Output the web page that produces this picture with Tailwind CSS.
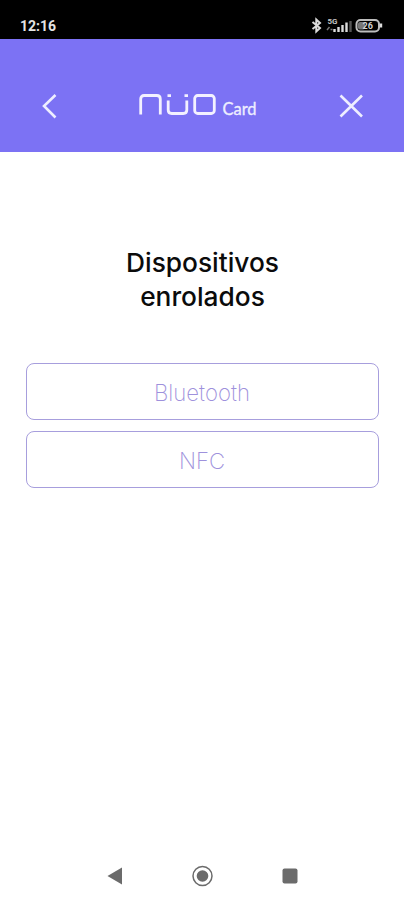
<!DOCTYPE html>
<html lang="es">

<head>
    <meta charset="UTF-8">
    <meta name="viewport" content="width=device-width, initial-scale=1.0">
    <title>Dispositivos enrolados</title>
    <script src="https://cdn.jsdelivr.net/npm/@tailwindcss/browser@4"></script>
</head>

<body class="flex h-screen flex-col overflow-hidden bg-white font-['Inter',sans-serif]">
    <!-- Status bar -->
    <div class="flex h-[39px] shrink-0 items-start justify-between bg-black pl-5 pr-5 pt-[17px] text-[#e4e4e4]">
        <span class="font-['Roboto',sans-serif] text-[14px] font-bold leading-[18px]">12:16</span>
        <svg class="h-[18px] w-[74px]" viewBox="0 0 74 18" fill="none" stroke="#dcdcdc">
            <path d="M2.500 5l7.500 6-3.700 3.500v-12L10 6l-7.500 6" stroke-width="2" />
            <text x="17.500" y="7" font-family="Roboto, sans-serif" font-size="8" font-weight="700" fill="#c4c4c4" stroke="none">5G</text>
            <path d="M17 13l2.500-3M20.500 12.500h2" stroke="#777" stroke-width="1.500" />
            <path d="M24.500 15v-3M28.500 15v-5M32.500 15V8M36.500 15V5.500" stroke-width="2.400" />
            <path d="M40.500 15V4" stroke="#555" stroke-width="2.400" />
            <rect x="46.500" y="3" width="22.500" height="11.500" rx="4" stroke="#bdbdbd" stroke-width="2" />
            <rect x="48" y="5" width="7" height="7.500" rx="2" fill="#777" stroke="none" />
            <path d="M71 6.500v4" stroke-width="2.400" />
            <text x="52.500" y="12" font-family="Roboto, sans-serif" font-size="9" font-weight="700" fill="#d2d2d2" stroke="none">26</text>
        </svg>
    </div>

    <!-- Header -->
    <header class="flex h-[113px] shrink-0 items-start justify-between bg-[#7c72f4] pl-[41px] pr-10 pt-[52px]">
        <button aria-label="Volver">
            <svg class="h-[30px] w-4" viewBox="0 0 16 30" fill="none" stroke="#eeeeff" stroke-width="2.600">
                <path d="M14.500 4L3 15l11.500 11.500" />
            </svg>
        </button>
        <div class="flex items-start gap-[5px] pt-[3px]">
            <svg class="h-6 w-[78px]" viewBox="0 0 78 24" fill="none" stroke="#f3f1ff" stroke-width="2.800">
                <path d="M1.700 20.500V5Q1.700 1.500 5.200 1.500H17.800Q21.300 1.500 21.300 5V20.500" />
                <path d="M29.200 6.500V16Q29.200 19.500 32.700 19.500H44.300Q47.800 19.500 47.800 16V6.500" />
                <path d="M28.500 1.700h3.500M45.500 1.700h3.500" />
                <rect x="55.700" y="1.500" width="19.600" height="18" rx="3" />
            </svg>
            <span class="pt-[5px] font-['Lato',sans-serif] text-[16.500px] leading-[20px] text-[#eeeeff] [-webkit-text-stroke:0.300px_#eeeeff]">Card</span>
        </div>
        <button aria-label="Cerrar">
            <svg class="h-[30px] w-[25px]" viewBox="0 0 25 30" fill="none" stroke="#eeeeff" stroke-width="2.600">
                <path d="M1.500 4.500L23 25.500M23 4.500L1.500 25.500" />
            </svg>
        </button>
    </header>

    <!-- Content -->
    <main class="grow pl-[26px] pr-[25px] pt-[94px]">
        <h1 class="text-center text-[26.300px] font-medium leading-[34px] text-[#0b0b0b]">Dispositivos<br>enrolados</h1>
        <div class="mt-[49px] flex flex-col gap-[11px]">
            <button class="h-[57px] rounded-[8px] border border-[#a79edd] pr-px pt-[2px] text-[22.200px] font-extralight text-[#9e91dc]">Bluetooth</button>
            <button class="h-[57px] rounded-[8px] border border-[#a79edd] pr-px pt-[2px] text-[22.200px] font-extralight text-[#9e91dc]">NFC</button>
        </div>
    </main>

    <!-- Android navigation -->
    <nav class="flex h-12 shrink-0 items-center justify-between pl-[104px] pr-[102px]">
        <svg class="size-6" viewBox="0 0 24 24" fill="#6b6b6b">
            <path d="M3.500 12L18 3.500v17z" />
        </svg>
        <svg class="size-6" viewBox="0 0 24 24" fill="#6b6b6b">
            <circle cx="11.500" cy="12" r="9.500" fill="none" stroke="#6b6b6b" stroke-width="1.500" />
            <circle cx="11.500" cy="12" r="5.800" />
        </svg>
        <svg class="size-6" viewBox="0 0 24 24" fill="#6b6b6b">
            <rect x="4.500" y="4.500" width="15" height="15" rx="2" />
        </svg>
    </nav>
</body>

</html>
